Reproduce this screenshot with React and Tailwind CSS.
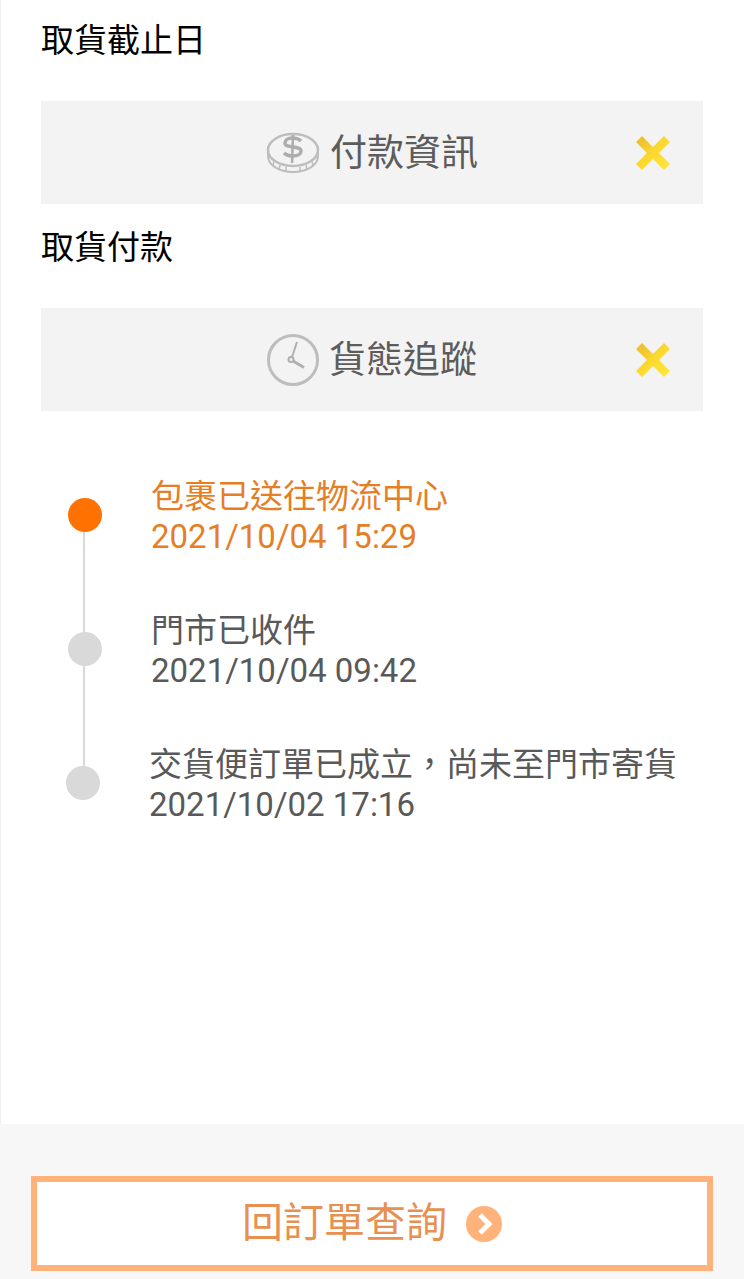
const cjk = "font-['Roboto','Noto_Sans_CJK_TC',sans-serif]";

function CoinIcon() {
  return (
    <svg width="54" height="42" viewBox="0 0 54 42" fill="none" stroke="#bdbdbd">
      <path d="M2 18v6c0 9 11 16 25 16s25-7 25-16v-6" strokeWidth="2" />
      <ellipse cx="27" cy="18" rx="25" ry="16" fill="#f3f3f3" strokeWidth="2.5" />
      <path d="M8 29l-1 5M14 33l-1 5M20 35v5M34 35v5M40 33l1 5M46 29l1 5" strokeWidth="1.5" />
      <path d="M35 9c-2-2-5-3-9-3-4 0-7 2-7 5 0 6 16 2 16 8 0 3-3 5-8 5-4 0-7-1-9-3" strokeWidth="3.5" stroke="#adadad" />
      <path d="M27 3l-1 28" strokeWidth="2.5" stroke="#adadad" />
    </svg>
  );
}

function ClockIcon() {
  return (
    <svg width="52" height="52" viewBox="0 0 52 52" fill="none" stroke="#bdbdbd">
      <circle cx="26" cy="26" r="24.5" strokeWidth="3" />
      <path d="M30 8l-5 15" strokeWidth="2" stroke="#b0b0b0" />
      <path d="M26 27l11 6.5" strokeWidth="3" stroke="#b0b0b0" />
      <circle cx="24" cy="25.5" r="2.5" strokeWidth="2" stroke="#b0b0b0" />
    </svg>
  );
}

function CloseIcon({ id }) {
  return (
    <svg width="34" height="34" viewBox="0 0 34 34" className="absolute right-[33px] top-1/2 -translate-y-1/2">
      <defs>
        <linearGradient id={id} x1="0" y1="0" x2="1" y2="1">
          <stop offset="0" stopColor="#e8b82c" />
          <stop offset="0.5" stopColor="#fdd92f" />
          <stop offset="1" stopColor="#ffe83c" />
        </linearGradient>
      </defs>
      <path
        d="M6 0l11 11L28 0l6 6-11 11 11 11-6 6-11-11L6 34l-6-6 11-11L0 6z"
        fill={`url(#${id})`}
      />
    </svg>
  );
}

function SectionBar({ icon, title, id }) {
  return (
    <div className="relative flex h-[103px] items-center justify-center gap-[10px] bg-[#f3f3f3]">
      {icon}
      <span className="pt-[2px] text-[37px] leading-[44px] text-[#5c5c5c]">{title}</span>
      <CloseIcon id={id} />
    </div>
  );
}

function TrackRow({ title, time, active, last, className = "" }) {
  const color = active ? "text-[#e57e25]" : "text-[#595959]";
  return (
    <div className={`flex h-[134px] items-start ${className}`}>
      <div className="mt-[23px] flex h-[134px] w-[34px] shrink-0 flex-col items-center">
        <div className={`h-[34px] w-[34px] shrink-0 rounded-full ${active ? "bg-[#ff7100]" : "bg-[#d9d9d9]"}`} />
        {!last && <div className="ml-[-2px] w-[2px] grow bg-[#d9d9d9]" />}
      </div>
      <div className={`mt-[1px] ml-[49px] text-[33px] leading-[41px] whitespace-nowrap ${color}`}>
        <div>{title}</div>
        <div className="-mt-[1px]">{time}</div>
      </div>
    </div>
  );
}

export default function App() {
  return (
    <div className={`flex h-[1279px] w-[744px] flex-col overflow-hidden bg-white ${cjk}`}>
      <div className="grow border-l border-[#eeeeee] pr-[41px] pl-[40px]">
        <h2 className="pt-[20px] pb-[40px] text-[33px] leading-[41px] font-normal text-black">取貨截止日</h2>
        <SectionBar id="close-pay" icon={<CoinIcon />} title="付款資訊" />
        <h2 className="pt-[23px] pb-[40px] text-[33px] leading-[41px] font-normal text-black">取貨付款</h2>
        <SectionBar id="close-track" icon={<ClockIcon />} title="貨態追蹤" />

        <div className="mt-[64px] pl-[27px]">
          <TrackRow active title="包裹已送往物流中心" time="2021/10/04 15:29" />
          <TrackRow title="門市已收件" time="2021/10/04 09:42" />
          <TrackRow last className="ml-[-2px]" title={"交貨便訂單已成立\uFF0C尚未至門市寄貨"} time="2021/10/02 17:16" />
        </div>
      </div>

      <div className="h-[155px] shrink-0 bg-[#f7f7f7] pt-[52px] pl-[31px]">
        <button className="flex h-[95px] w-[682px] items-center justify-center gap-[19px] border-[6px] border-[#ffb27a] bg-white text-[41px] text-[#e8904f]">
          <span>回訂單查詢</span>
          <svg width="36" height="36" viewBox="0 0 36 36">
            <circle cx="18" cy="18" r="18" fill="#ffb27a" />
            <path d="M14 9l9 9-9 9" fill="none" stroke="#ffffff" strokeWidth="5" />
          </svg>
        </button>
      </div>
    </div>
  );
}
